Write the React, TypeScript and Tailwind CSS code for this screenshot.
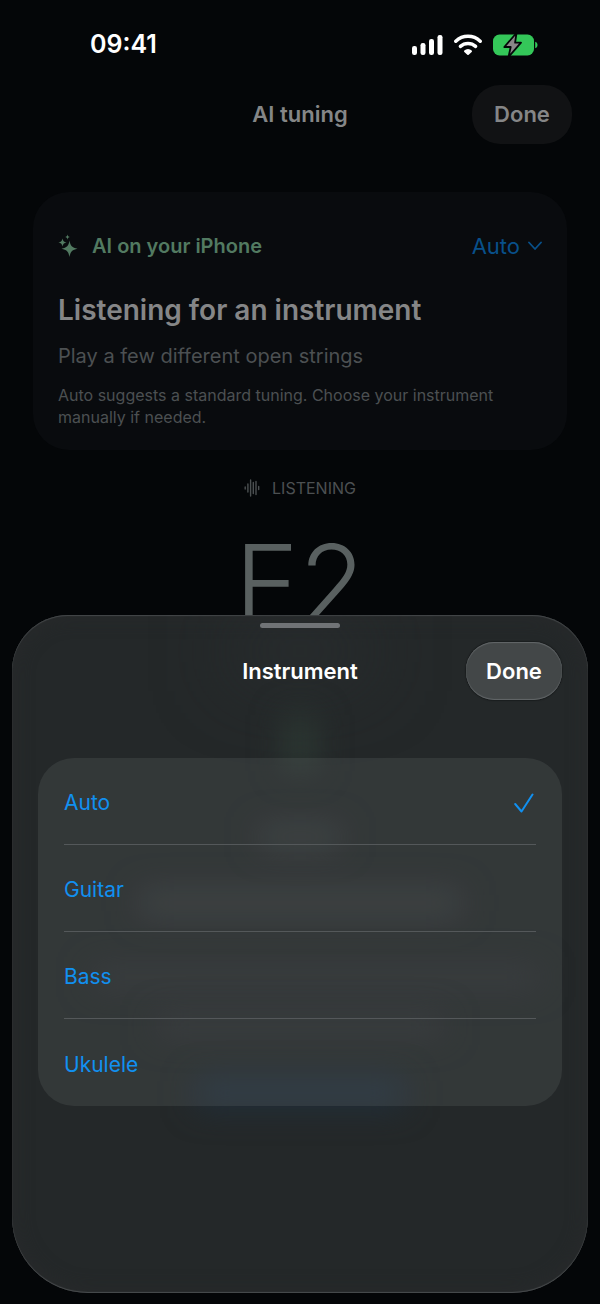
import React, { useState } from 'react';

const instruments = ['Auto', 'Guitar', 'Bass', 'Ukulele'];

const SignalIcon = () => (
  <svg width="32" height="22" viewBox="0 0 32 22" fill="#fff" aria-hidden="true">
    <rect x="0" y="12" width="5" height="9" rx="2.2" />
    <rect x="8.5" y="9" width="5" height="12" rx="2.2" />
    <rect x="17" y="5" width="5" height="16" rx="2.2" />
    <rect x="25.5" y="1" width="5" height="20" rx="2.2" />
  </svg>
);

const WifiIcon = () => (
  <svg width="28" height="22" viewBox="0 0 28 22" fill="none" stroke="#fff" aria-hidden="true">
    <path d="M1.8 7.2a17.8 17.8 0 0 1 24.4 0" strokeWidth="3.5" strokeLinecap="round" />
    <path d="M6.4 12.4a11.4 11.4 0 0 1 15.2 0" strokeWidth="3.5" strokeLinecap="round" />
    <path d="M14 20 11 17.2a4.2 4.2 0 0 1 6 0Z" fill="#fff" strokeWidth="2" strokeLinejoin="round" />
  </svg>
);

const BatteryIcon = () => (
  <svg width="46" height="24" viewBox="0 0 46 24" aria-hidden="true">
    <rect x="1" y="1.5" width="41" height="21" rx="6.5" fill="#34c759" />
    <path d="M43.2 8.800c1.600.6 2.300 1.700 2.300 3.200s-.7 2.600-2.300 3.200Z" fill="#34c759" />
    <path
      d="M24.500 0 12.300 14h6.400L16.500 24 29 9.700H23.100Z"
      fill="#8a8688"
      stroke="#040608"
      strokeWidth="1.8"
      strokeLinejoin="round"
    />
  </svg>
);

const SparklesIcon = () => (
  <svg width="20" height="24" viewBox="0 0 20 24" fill="#527a61" aria-hidden="true">
    <path d="M11.5 6.5c1 5.500 2.500 7 8 8.200-5.500 1.200-7 2.700-8 8.300-1-5.600-2.500-7.100-8-8.300 5.500-1.200 7-2.700 8-8.200Z" />
    <path d="M4.500 4.500c.5 2.500 1.300 3.300 4 4-2.700.7-3.500 1.500-4 4-.5-2.500-1.300-3.300-4-4 2.700-.7 3.500-1.500 4-4Z" />
    <path d="M9.500.5c.3 1.600.9 2.200 2.500 2.600-1.600.4-2.200 1-2.500 2.600C9.200 4.100 8.600 3.500 7 3.100 8.600 2.700 9.200 2.100 9.500.5Z" />
  </svg>
);

const ChevronIcon = () => (
  <svg width="14" height="10" viewBox="0 0 14 10" fill="none" aria-hidden="true">
    <path d="M1 1.500 7 8l6-6.500" stroke="#08508a" strokeWidth="1.8" strokeLinecap="round" strokeLinejoin="round" />
  </svg>
);

const WaveformIcon = () => (
  <svg
    width="16"
    height="18"
    viewBox="0 0 16 18"
    fill="none"
    stroke="#4c5052"
    strokeWidth="1.4"
    strokeLinecap="round"
    aria-hidden="true"
  >
    <path d="M1.200 8v2M3.900 5v8M6.600 1v16M9.300 3.500v11M12 2.500v13M14.700 7.500v3" />
  </svg>
);

const CheckIcon = () => (
  <svg width="20" height="20" viewBox="0 0 20 20" fill="none" aria-hidden="true">
    <path d="M1.200 11 7.500 18.500 18.500 1.500" stroke="#1190f0" strokeWidth="2" strokeLinecap="round" strokeLinejoin="round" />
  </svg>
);

const StatusBar = () => (
  <div className="flex h-[85px] items-center justify-between pt-1 pr-[62px] pl-[90px]">
    <span className="text-[25px] font-semibold text-white">09:41</span>
    <div className="flex items-center gap-2.5">
      <SignalIcon />
      <WifiIcon />
      <BatteryIcon />
    </div>
  </div>
);

const InstrumentSheet = () => {
  const [selected, setSelected] = useState('Auto');

  return (
    <section
      aria-labelledby="sheet-title"
      className="absolute inset-x-3 bottom-[11px] overflow-hidden rounded-t-[56px] rounded-b-[76px] bg-[#242829] px-[26px] pb-[187px] shadow-[inset_0_1px_1px_#45484a,inset_0_-1px_1px_#4a4d4f,inset_0_0_20px_#292a2c]"
    >
      {/* Page content glowing through the glass */}
      <div className="pointer-events-none absolute inset-0" aria-hidden="true">
        <div className="absolute top-4 left-1/2 h-10 w-32 -translate-x-1/2 bg-[#2b2f31] blur-2xl" />
        <div className="absolute top-25 left-1/2 h-14 w-8 -translate-x-1/2 bg-[#2c3833] blur-lg" />
        <div className="absolute top-53 left-1/2 h-5 w-20 -translate-x-1/2 bg-[#363a3b] blur-lg" />
        <div className="absolute top-69 left-1/2 h-6 w-80 -translate-x-1/2 bg-[#343739] blur-lg" />
        <div className="absolute top-88 right-12 left-20 h-5 bg-[#2c3032] blur-lg" />
        <div className="absolute top-100 left-1/2 h-5 w-72 -translate-x-1/2 bg-[#2c3032] blur-lg" />
        <div className="absolute top-116 left-1/2 h-7 w-52 -translate-x-1/2 bg-[#202f3c] blur-lg" />
      </div>

      <div className="relative">
        <div className="mx-auto h-2 w-20 pt-2">
          <div className="h-[5px] rounded-full bg-[#707376]" />
        </div>
        <header className="mt-[18px] grid h-[60px] grid-cols-[1fr_auto_1fr] items-center">
          <h2 id="sheet-title" className="col-start-2 text-[22px] font-semibold text-white">Instrument</h2>
          <button className="h-[58px] w-24 justify-self-end rounded-[28px] bg-[#434748] text-[22px] font-semibold text-white shadow-[inset_0_1px_1px_#64686a,inset_0_-1px_1px_#64686a,0_0_1px_1px_#1a1d1e]">
            Done
          </button>
        </header>

        <fieldset aria-labelledby="sheet-title" className="mt-[57px] rounded-[36px] bg-[#8a9292]/15 px-[26px]">
          {instruments.map(name => (
            <label
              key={name}
              className="flex h-[87px] items-center justify-between border-b border-[#54585a] pt-1 pr-0.5 text-[21px] text-[#1190f0] last:border-b-0"
            >
              {name}
              <input
                type="radio"
                name="instrument"
                value={name}
                checked={selected === name}
                onChange={() => setSelected(name)}
                className="sr-only"
              />
              {selected === name && <CheckIcon />}
            </label>
          ))}
        </fieldset>
      </div>
    </section>
  );
};

const App: React.FC = () => {
  return (
    <div className="relative min-h-screen overflow-hidden bg-[#040608] font-['Inter',sans-serif]">
      <StatusBar />

      <header className="grid grid-cols-[1fr_auto_1fr] items-center px-7">
        <h1 className="col-start-2 text-[22px] font-semibold text-[#858687]">AI tuning</h1>
        <button className="h-[59px] w-[100px] justify-self-end rounded-[28px] bg-[#111214] text-[22px] font-semibold text-[#858687]">
          Done
        </button>
      </header>

      <main>
        <section className="mx-[33px] mt-12 rounded-[36px] bg-[#090b0e] px-[25px] pt-10 pb-[22px]">
          <div className="flex h-7 items-center justify-between">
            <div className="flex items-center gap-3.5 text-xl font-semibold text-[#527a61]">
              <SparklesIcon />
              AI on your iPhone
            </div>
            <button aria-haspopup="dialog" className="flex items-center gap-2 text-[22px] text-[#08508a]">
              Auto
              <ChevronIcon />
            </button>
          </div>
          <h2 className="mt-8 text-[28px] leading-9 font-semibold text-[#858687]">Listening for an instrument</h2>
          <p className="mt-3.5 text-xl leading-7 text-[#4c5052]">Play a few different open strings</p>
          <p className="mt-3.5 text-base leading-[22px] text-[#4c5052]">
            Auto suggests a standard tuning. Choose your instrument manually if needed.
          </p>
        </section>

        <p className="mt-[26px] flex items-center justify-center gap-3 text-base text-[#4c5052]">
          <WaveformIcon />
          LISTENING
        </p>
        <p className="mt-9 text-center text-[108px] leading-[96px] font-light text-[#596060]">E2</p>
      </main>

      <InstrumentSheet />
    </div>
  );
};

export default App;
